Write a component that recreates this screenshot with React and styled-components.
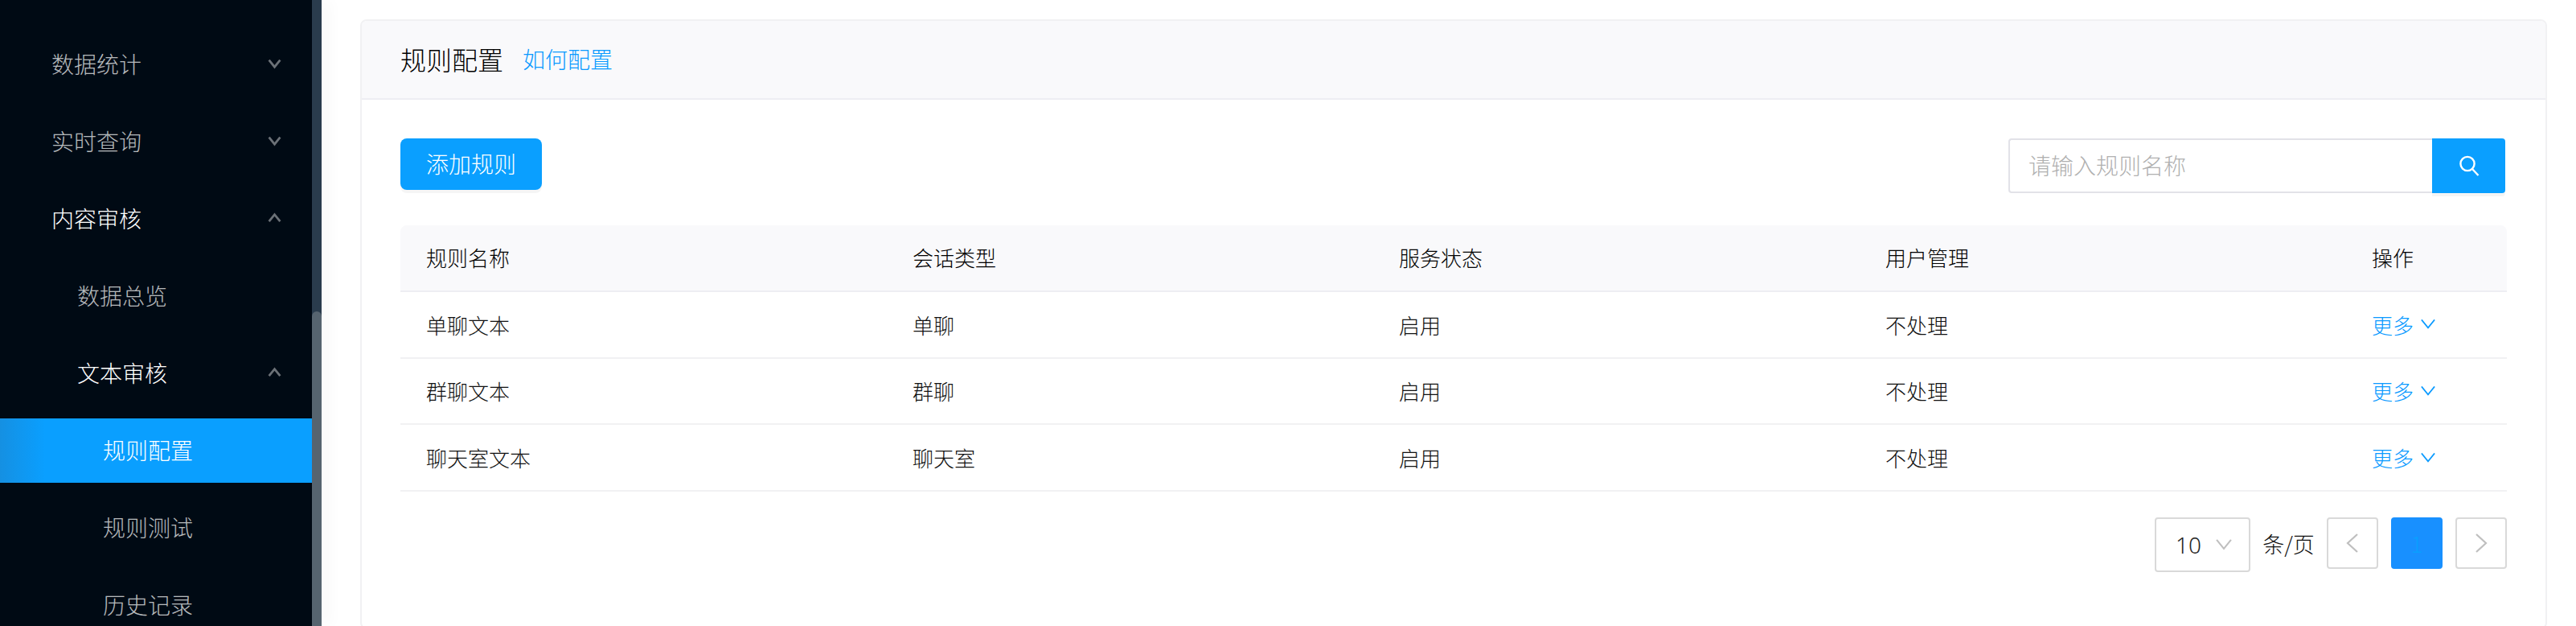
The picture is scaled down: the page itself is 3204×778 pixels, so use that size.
import React from 'react';
import styled, { createGlobalStyle } from 'styled-components';

const Global = createGlobalStyle`
  html, body { margin: 0; padding: 0; background: #fff; }
  body { font-family: "Noto Sans CJK SC", "Liberation Sans", sans-serif; font-weight: 300; overflow: hidden; }
  * { box-sizing: border-box; }
`;

const Page = styled.div`
  display: flex;
  width: 3204px;
  height: 778px;
  overflow: hidden;
`;
const Sidebar = styled.nav`
  width: 388px;
  flex: none;
  background: #000a14;
  padding-top: 40px;
  display: flex;
  flex-direction: column;
  gap: 16px;
`;
const MenuRow = styled.div`
  height: 80px;
  flex: none;
  display: flex;
  align-items: center;
  justify-content: space-between;
  padding-left: ${p => p.$indent}px;
  padding-right: 38px;
  padding-bottom: 2px;
  font-size: 28px;
  color: ${p => (p.$bright ? '#ffffff' : 'rgba(255,255,255,0.72)')};
  background: ${p => (p.$selected ? 'linear-gradient(90deg, #1590e2 0, #0a9fff 56px)' : 'transparent')};
`;
const Track = styled.div`
  width: 12px;
  flex: none;
  background: #2a3c4d;
  box-shadow: 10px 0 18px rgba(0, 0, 0, 0.035);
  position: relative;
  z-index: 1;
`;
const Thumb = styled.div`
  margin-top: 387px;
  height: 391px;
  background: #56646f;
  border-radius: 6px 6px 0 0;
`;
const Main = styled.main`
  flex: 1;
  min-width: 0;
  padding: 24px 36px 0 48px;
  overflow: hidden;
`;
const Panel = styled.section`
  height: 758px;
  border: 2px solid #f1f1f3;
  border-radius: 8px;
  background: #fff;
`;
const PanelHead = styled.header`
  height: 98px;
  background: #f9f9fb;
  border-bottom: 2px solid #eeeef3;
  border-radius: 6px 6px 0 0;
  display: flex;
  align-items: center;
  gap: 24px;
  padding: 0 0 2px 48px;
`;
const Title = styled.h2`
  margin: 0;
  font-size: 32px;
  font-weight: 300;
  color: #000;
`;
const HelpLink = styled.a`
  font-size: 28px;
  color: #0a9aff;
`;
const PanelBody = styled.div`
  padding: 48px 48px 0 48px;
`;
const Toolbar = styled.div`
  display: flex;
  justify-content: space-between;
  align-items: flex-start;
  height: 68px;
`;
const AddButton = styled.button`
  width: 176px;
  height: 64px;
  border: 0;
  border-radius: 8px;
  background: #0a9fff;
  color: #fff;
  font: inherit;
  font-size: 28px;
  padding: 0 0 2px;
  box-shadow: 0 4px 0 rgba(0, 0, 0, 0.04);
`;
const Search = styled.div`
  display: flex;
  width: 618px;
  height: 68px;
  margin-right: 2px;
`;
const SearchInput = styled.div`
  flex: 1;
  border: 2px solid #e2e2e8;
  border-right: 0;
  border-radius: 4px 0 0 4px;
  padding-left: 23px;
  font-size: 28px;
  line-height: 62px;
  color: #b0b0b0;
`;
const SearchButton = styled.button`
  width: 91px;
  border: 0;
  background: #0a9fff;
  border-radius: 0 4px 4px 0;
  display: flex;
  align-items: center;
  justify-content: center;
  padding: 0;
  box-shadow: 0 4px 0 rgba(0, 0, 0, 0.04);
`;
const TableWrap = styled.div`
  margin-top: 40px;
`;
const Row = styled.div`
  display: grid;
  grid-template-columns: 605px 605px 605px 605px 1fr;
  height: ${p => (p.$head ? 83 : 82.67)}px;
  padding-bottom: ${p => (p.$head ? 2 : 0)}px;
  align-items: center;
  background: ${p => (p.$head ? '#f9f9fb' : '#fff')};
  border-bottom: 2px solid ${p => (p.$head ? '#eeeef3' : '#f1f1f3')};
  border-radius: ${p => (p.$head ? '8px 8px 0 0' : '0')};
  font-size: 26px;
  color: ${p => (p.$head ? '#000' : '#111')};
`;
const Cell = styled.div`
  padding-left: 32px;
`;
const More = styled.a`
  display: inline-flex;
  align-items: center;
  gap: 8px;
  color: #0a9aff;
`;
const Pager = styled.div`
  margin-top: 32px;
  display: flex;
  align-items: flex-start;
  justify-content: flex-end;
`;
const SizeSelect = styled.div`
  width: 119px;
  height: 68px;
  border: 2px solid #d9d9d9;
  border-radius: 4px;
  display: flex;
  align-items: center;
  gap: 17px;
  padding-left: 24px;
  font-size: 28px;
  font-family: "Noto Sans", sans-serif;
  color: #262626;
`;
const SizeLabel = styled.span`
  width: 95px;
  height: 68px;
  line-height: 66px;
  text-align: center;
  font-size: 27px;
  color: #111;
`;
const PageButton = styled.div`
  width: 64px;
  height: 64px;
  margin-left: ${p => p.$gap}px;
  border: 2px solid ${p => (p.$active ? '#1890ff' : '#d9d9d9')};
  border-radius: 4px;
  background: ${p => (p.$active ? '#1890ff' : '#fff')};
  color: #0a9fff;
  font-size: 28px;
  display: flex;
  align-items: center;
  justify-content: center;
`;

const Chevron = ({ up, size = 16, color = '#6b7177', width = 2.6 }) => (
  <svg width={size} height={size} viewBox="0 0 16 16" fill="none">
    <path d={up ? 'M1.5 11.5 8 3.5l6.5 8' : 'M1.5 3.5 8 11.5l6.5-8'} stroke={color} strokeWidth={width} />
  </svg>
);

const Menu = [
  { t: '数据统计', indent: 64, arrow: 'down' },
  { t: '实时查询', indent: 64, arrow: 'down' },
  { t: '内容审核', indent: 64, arrow: 'up', bright: true },
  { t: '数据总览', indent: 96 },
  { t: '文本审核', indent: 96, arrow: 'up', bright: true },
  { t: '规则配置', indent: 128, bright: true, selected: true },
  { t: '规则测试', indent: 128 },
  { t: '历史记录', indent: 128 },
];
const Rows = [
  ['单聊文本', '单聊'],
  ['群聊文本', '群聊'],
  ['聊天室文本', '聊天室'],
];

export default function App() {
  return (
    <Page>
      <Global />
      <Sidebar>
        {Menu.map(m => (
          <MenuRow key={m.t} $indent={m.indent} $bright={m.bright} $selected={m.selected}>
            <span>{m.t}</span>
            {m.arrow && <Chevron up={m.arrow === 'up'} size={17} />}
          </MenuRow>
        ))}
      </Sidebar>
      <Track><Thumb /></Track>
      <Main>
        <Panel>
          <PanelHead>
            <Title>规则配置</Title>
            <HelpLink>如何配置</HelpLink>
          </PanelHead>
          <PanelBody>
            <Toolbar>
              <AddButton>添加规则</AddButton>
              <Search>
                <SearchInput>请输入规则名称</SearchInput>
                <SearchButton aria-label="搜索">
                  <svg width="28" height="28" viewBox="0 0 28 28" fill="none" stroke="#fff" strokeWidth="2.4">
                    <circle cx="12" cy="11.5" r="8.6" />
                    <path d="M18 18l7.5 8" />
                  </svg>
                </SearchButton>
              </Search>
            </Toolbar>
            <TableWrap>
              <Row $head>
                {['规则名称', '会话类型', '服务状态', '用户管理', '操作'].map(h => <Cell key={h}>{h}</Cell>)}
              </Row>
              {Rows.map(r => (
                <Row key={r[0]}>
                  <Cell>{r[0]}</Cell>
                  <Cell>{r[1]}</Cell>
                  <Cell>启用</Cell>
                  <Cell>不处理</Cell>
                  <Cell>
                    <More>更多<Chevron size={20} color="#0a9aff" width={1.3} /></More>
                  </Cell>
                </Row>
              ))}
            </TableWrap>
            <Pager>
              <SizeSelect>10<Chevron size={22} color="#bfbfbf" width={1.5} /></SizeSelect>
              <SizeLabel>条/页</SizeLabel>
              <PageButton $gap={0}>
                <svg width="18" height="26" viewBox="0 0 18 26" fill="none" stroke="#bfbfbf" strokeWidth="2.2"><path d="M15 2 3 13l12 11" /></svg>
              </PageButton>
              <PageButton $gap={16} $active>1</PageButton>
              <PageButton $gap={16}>
                <svg width="18" height="26" viewBox="0 0 18 26" fill="none" stroke="#bfbfbf" strokeWidth="2.2"><path d="M3 2l12 11L3 24" /></svg>
              </PageButton>
            </Pager>
          </PanelBody>
        </Panel>
      </Main>
    </Page>
  );
}
